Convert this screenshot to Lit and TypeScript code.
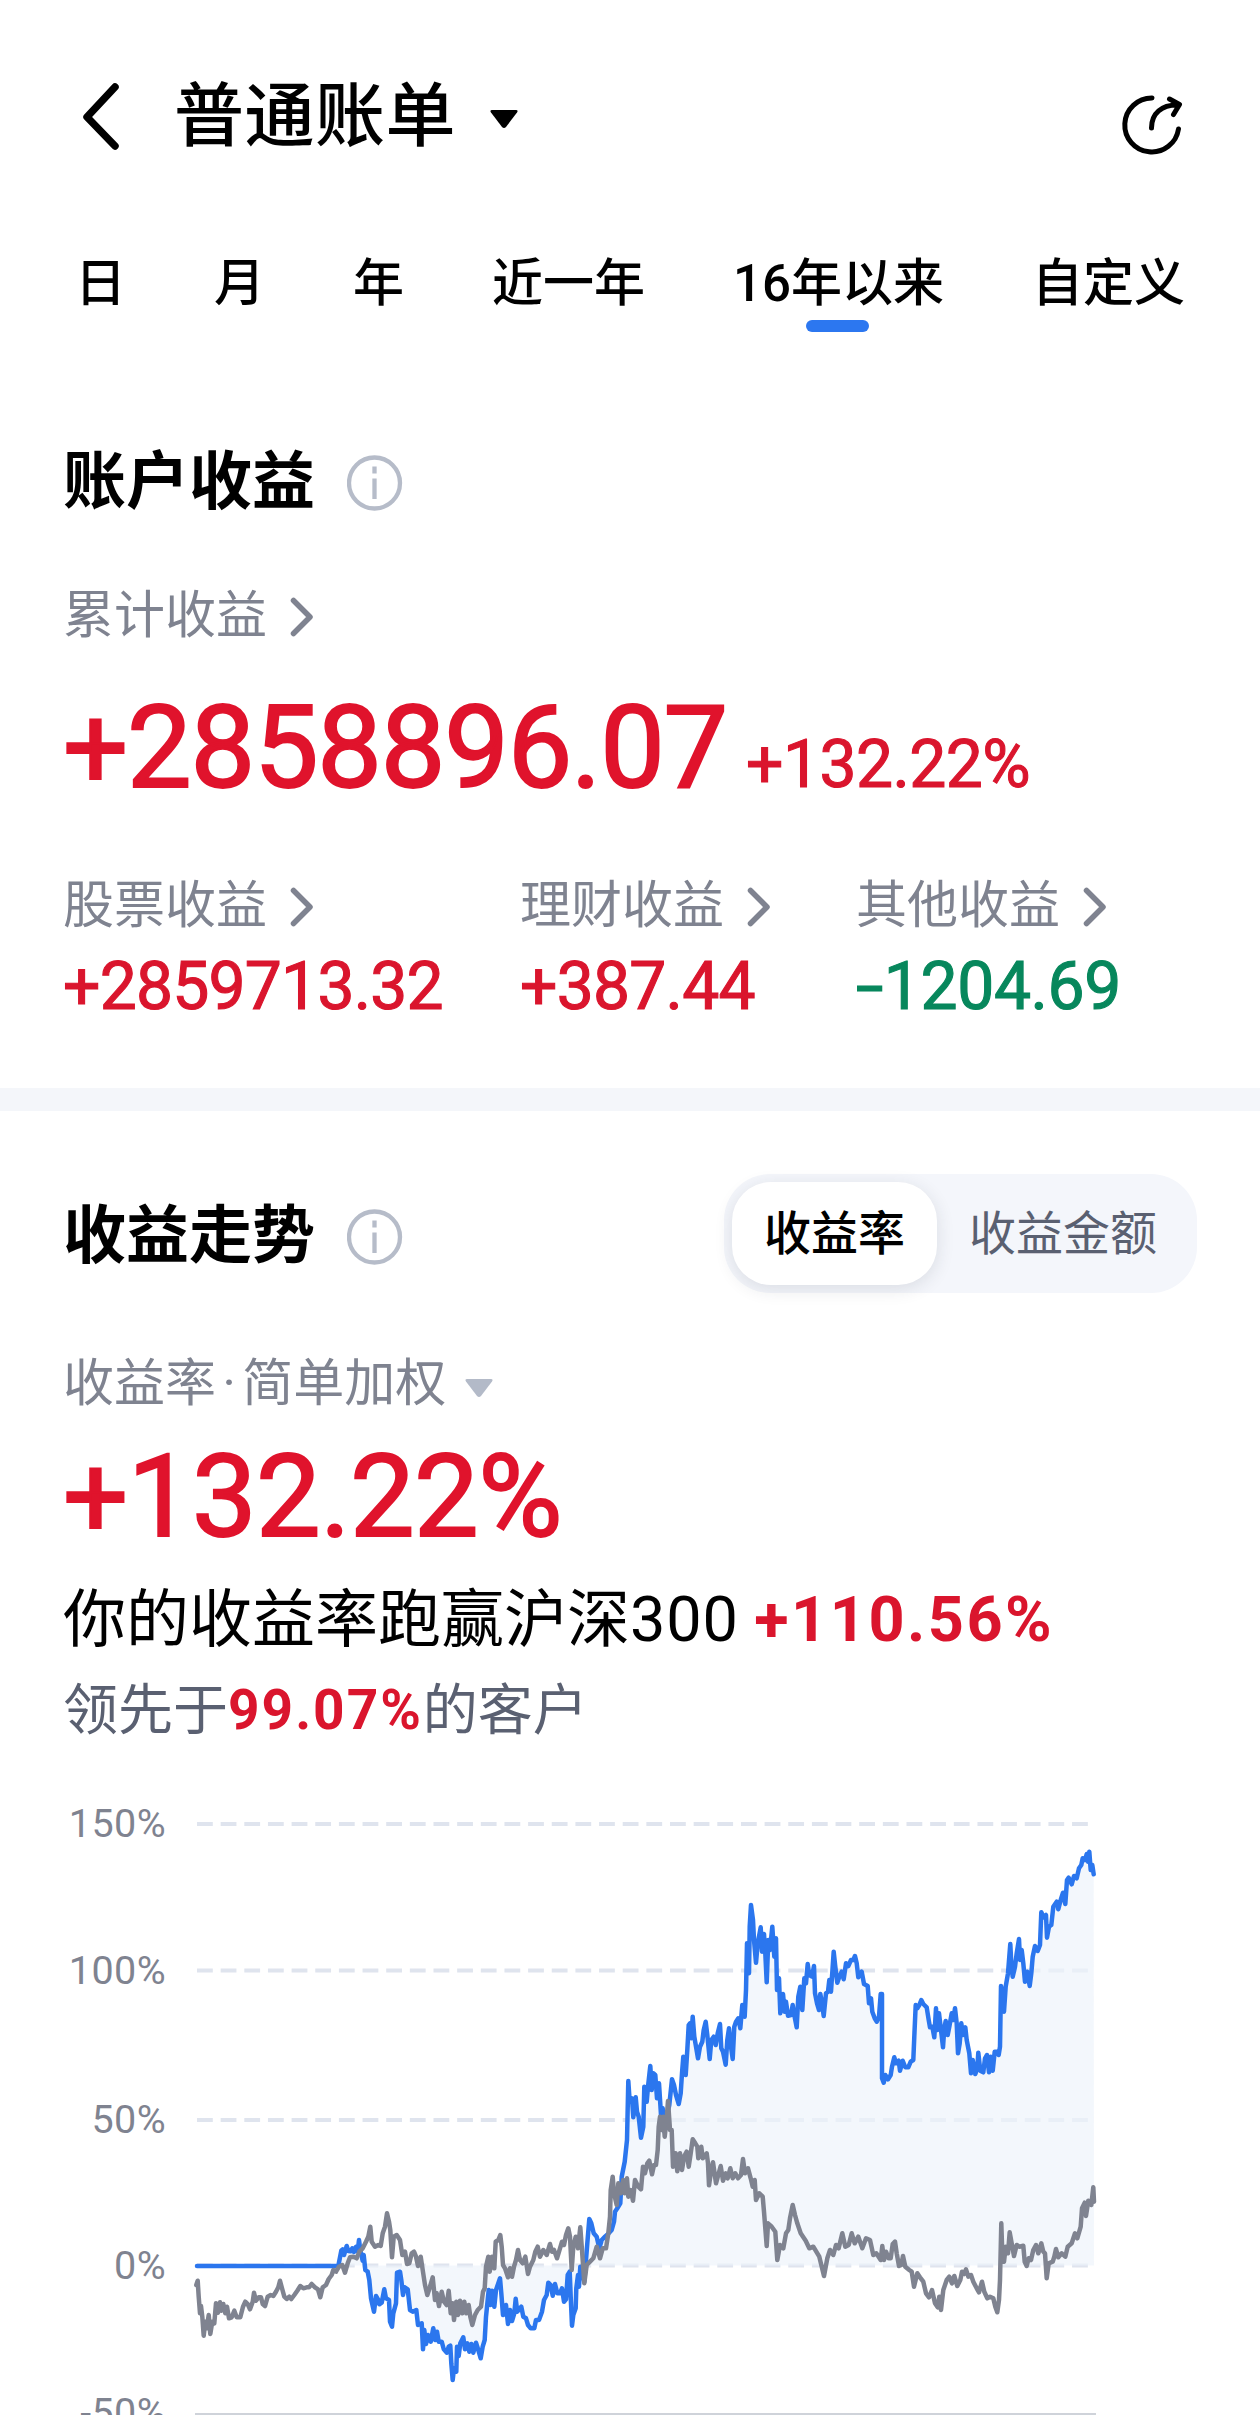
import { LitElement, html, svg, css } from "lit";
import { customElement, property } from "lit/decorators.js";

/* Chart coordinates are stored in thirds of a pixel. Every block is an origin
   followed by x,y pairs relative to it. */
type Block = { ox: number; oy: number; pts: string };

const BLUE: Block[] = [
  { ox: 540, oy: 6150, pts: "51,648 475,648 484,602 488,598 492,615 500,588 505,603 512,604 517,595 522,606 528,590 533,604 537,570 541,600 548,632 551,615 556,660 563,665 568,690 573,745 578,768 582,785 588,738 594,748 598,763 605,758 613,718 618,745 627,750 630,815 636,830 640,790 648,760 651,668 660,665 664,690 669,735 674,712 683,718 690,780 698,785 709,780 714,825 725,820 729,898 733,840 738,882 744,855 752,875 760,835 766,870 771,845 776,875 785,875 791,897 800,908 806,890 811,887 814,940 818,990 822,955 829,965 831,890 836,918 841,880 850,862 855,898 862,880 868,905 874,882 880,908 888,878 895,900 902,925 908,890 914,870 918,800 926,720 931,765 936,722 943,770 948,720" },
  { ox: 1440, oy: 6090, pts: "60,745 64,790 69,855 78,825 84,882 90,840 96,873 103,850 107,806 112,845 124,830 130,860 138,865 144,885 152,895 163,895 168,870 177,870 186,845 192,810 200,795 205,758 212,765 218,797 225,762 232,790 240,790 246,775 252,815 258,808 263,735 269,725 272,800 276,887 280,855 287,835 289,775 294,735 297,770 301,710 307,720 313,755 318,690 322,640 328,567 334,580 341,610 350,620 358,655 365,630 375,620 386,610 395,600 402,575 405,545 412,535 421,520 425,440 434,395 441,330 445,153 449,215 456,205 460,262 467,202 471,245 476,260 483,323 490,290 493,170 500,215 504,170 511,108 515,180 520,130 526,135 531,205 537,160 543,255 548,235 553,305 560,262 568,225 576,148 582,165 588,195 596,222 602,190 606,130 610,80 617,135 622,60" },
  { ox: 1920, oy: 5580, pts: "146,495 150,490 154,535 158,470 163,530 169,565 174,595 180,560 187,545 191,510 197,485 202,525 209,597 214,540 221,530 227,555 233,520 240,492 244,565 249,575 257,614 262,540 267,505 272,555 278,597 283,500 288,485 295,475 301,505 307,435 314,470 318,390 321,250 327,340 329,200 333,135 339,180 342,240 348,308 353,250 362,202 366,275 372,222 376,280 380,367 385,240 390,270 397,200 403,290 408,235 411,390 417,355 421,460 429,402 434,455 438,425 444,467 453,465 458,435 463,465 470,502 475,410 481,380 487,450 493,355 498,370 503,312 508,345 516,350 522,318 525,400 531,430 537,450 541,402 546,430 551,468 558,400 564,395 568,360 573,395 581,275 586,320 592,368 598,350 605,335 611,358 618,310 625,318 633,300 640,300 645,288 650,310 655,352 665,335 672,372 683,378 687,430 693,415 697,455 704,475" },
  { ox: 2580, oy: 5490, pts: "50,575 57,560 62,492 66,492 66,745 71,758 76,735 84,748 92,735 96,710 103,682 108,700 116,692 120,722 128,692 136,712 145,712 152,695 160,690 163,620 167,525 172,535 178,525 184,510 190,522 200,532 206,570 210,592 217,590 223,622 228,535 232,600 237,550 243,600 249,652 253,595 257,573 263,615 268,590 275,550 280,570 285,535 290,580 294,670 299,640 304,580 309,615 316,592 320,630 328,670 333,730 338,690 346,732 352,715 355,668 361,722 370,727 375,685 381,675 387,727 392,680 398,722 404,665 411,665 416,675 420,650 423,468 432,545 437,470 444,430 451,342 454,400 458,440 465,410 470,370 477,327 480,390 485,360 490,400 495,455 502,425 509,468 514,430 518,380 525,348 533,363 540,345 544,247 551,262 558,255 561,323 567,290 574,285 580,230 590,215 595,238 602,210 609,188 616,222 621,150 626,143 635,163 642,138 650,145 657,115 664,105 668,85 675,90 680,72 684,95 688,65 692,120 697,105 701,133" },
];

const GREY: Block[] = [
  { ox: 540, oy: 6150, pts: "49,705 53,692 56,740 60,790 63,768 67,800 71,857 76,815 80,835 86,795 91,852 97,815 103,820 108,760 114,788 120,757 124,782 130,762 136,790 141,770 147,805 155,802 163,782 170,802 181,802 189,770 196,755 203,762 210,778 218,755 222,728 228,752 236,742 243,742 248,762 255,768 263,740 272,735 280,738 288,725 295,712 300,692 306,715 313,740 320,747 328,740 334,747 343,735 352,722 361,708 370,715 380,712 387,712 395,702 405,712 414,718 421,742 428,712 438,705 446,687 455,675 460,660 468,665 477,650 487,645 495,668 503,640 510,622 520,620 530,625 538,605 548,595 558,575 565,560 571,530 575,575 585,590 595,585 602,588 608,550 615,530 621,490 627,515 631,540 636,622 641,560 650,555 660,570 667,615 675,605 681,642 688,640 695,610 702,605 708,620 714,648 722,620 728,660 735,705 742,735 750,710 758,682 765,750 770,730 777,768 785,725 792,755 800,765 806,722 812,790 818,760 822,810 829,755 834,795 840,752 847,790 853,755 859,790 866,765 871,800 877,825 885,795 893,780 903,770 909,725 914,715 918,650 925,620 929,665 936,620 943,655 947,575 955,570" },
  { ox: 1440, oy: 6090, pts: "61,615 65,650 69,705 75,715 84,742 90,715 96,740 102,710 108,690 114,660 120,690 128,700 136,680 144,732 150,710 160,690 166,665 173,650 180,680 190,660 200,675 210,642 216,665 222,660 231,685 240,655 246,635 252,645 258,615 265,595 270,620 275,720 280,650 287,620 294,655 301,592 306,660 313,760 320,705 330,695 340,685 350,650 360,685 368,655 378,655 385,610 390,560 392,480 398,440 402,490 410,525 415,460 422,490 430,450 434,490 441,445 445,500 452,480 459,512 465,450 475,470 483,478 489,410 495,430 502,400 508,392 516,433 522,405 528,405 533,360 536,290 540,260 545,300 550,260 554,320 560,265 564,213 570,300 575,300 579,410 587,370 592,424 600,370 606,420 613,378 620,365 626,410 632,370 638,328 646,340 652,350 655,385 664,350 668,385 680,370 684,400 687,466 693,425 699,397 708,460 716,430 722,408 729,452 737,430 743,445 751,415 758,445 766,430 774,445 783,435 789,387 795,430 804,415 812,445 818,470 824,450 828,510 838,490 848,500 852,545 860,648 864,580 875,590 886,605 892,690 900,645 910,655 918,610 925,600 930,565 938,525 945,555 952,580 962,610" },
  { ox: 0, oy: 0, pts: "2417,6722 2428,6745 2440,6740 2458,6770 2472,6828 2482,6775 2490,6750 2500,6765 2508,6735 2516,6745 2527,6700 2536,6740 2546,6735 2555,6700 2564,6730 2575,6710 2587,6745 2598,6715 2610,6720 2620,6765 2629,6760" },
  { ox: 2640, oy: 6240, pts: "2,540 7,498 12,540 18,515 26,535 32,535 38,492 45,485 50,520 57,558 64,555 69,528 76,560 88,570 95,575 102,620 112,580 120,592 130,605 138,640 147,652 156,630 165,670 173,682 178,650 183,690 190,630 200,600 208,590 216,610 223,588 232,618 241,600 246,575 253,582 258,568 265,590 273,585 280,605 290,625 297,637 306,605 313,635 322,655 330,650 340,655 346,680 352,697 357,660 360,600 364,430 367,520 372,545 377,500 384,520 389,457 395,490 402,528 410,495 418,500 430,497 434,545 440,558 446,535 453,540 460,510 468,495 475,520 484,490 490,515 495,520 500,595 506,550 518,545 523,530 528,507 535,532 545,520 556,530 563,500 575,490 585,460 592,475 602,440 606,385 614,368 618,408 625,362 634,375 640,322 642,365" },
];

const toPath = (blocks: Block[]) =>
  "M" +
  blocks
    .flatMap((b) =>
      b.pts.split(" ").map((p) => {
        const [x, y] = p.split(",").map(Number);
        return `${((b.ox + x) / 3).toFixed(1)} ${((b.oy + y) / 3).toFixed(1)}`;
      })
    )
    .join("L");

const ZERO_Y = 2265.5;
const GRID = [
  { y: 1824, label: "150%" },
  { y: 1970.5, label: "100%" },
  { y: 2120, label: "50%" },
  { y: ZERO_Y, label: "0%" },
];

@customElement("trend-chart")
export class TrendChart extends LitElement {
  static styles = css`
    :host { display: block; }
    .chart { display: block; width: 1260px; height: 635px; }
    .grid { stroke: #dfe4ee; stroke-width: 4; stroke-dasharray: 15.8 7.85; }
    .floor { stroke: #cfd3da; stroke-width: 2; }
    .axis { font: 400 39.5px Roboto, sans-serif; fill: #7f8390; text-anchor: end; letter-spacing: 0.4px; }
    .area { fill: rgba(237, 243, 251, 0.69); }
    .line { fill: none; stroke-linejoin: round; stroke-linecap: round; stroke-width: 4.5; }
    .blue { stroke: #2b76ee; }
    .grey { stroke: #7f8390; }
  `;

  render() {
    const blue = toPath(BLUE);
    return html`<svg class="chart" viewBox="0 1780 1260 635">
      ${GRID.map(
        (g) => svg`<line class="grid" x1="197" x2="1089" y1=${g.y} y2=${g.y}></line>
          <text class="axis" x="166" y=${g.y + 13}>${g.label}</text>`
      )}
      <line class="floor" x1="195" x2="1096" y1="2414" y2="2414"></line>
      <text class="axis" x="166" y="2426">-50%</text>
      <path class="area" d="${blue}L1094 ${ZERO_Y}L197 ${ZERO_Y}Z"></path>
      <path class="line blue" d=${blue}></path>
      <path class="line grey" d=${toPath(GREY)}></path>
    </svg>`;
  }
}

@customElement("info-icon")
export class InfoIcon extends LitElement {
  static styles = css`
    :host { display: block; width: 56px; height: 56px; }
    svg { display: block; }
  `;
  render() {
    return html`<svg width="56" height="56" viewBox="0 0 56 56" fill="none" stroke="#b6bcc9" stroke-width="4.3">
      <circle cx="27.5" cy="28" r="25.5"></circle>
      <path d="M27.500 11.5v7M27.500 23.5v20.5"></path>
    </svg>`;
  }
}

@customElement("entry-label")
export class EntryLabel extends LitElement {
  @property() text = "";
  static styles = css`
    :host { display: flex; align-items: center; height: 60px; color: #7f8390;
      font-size: 51px; line-height: 60px; }
    .text { white-space: nowrap; }
    .chevron { display: block; margin: 2px 0 0 19.5px; }
  `;
  render() {
    return html`<span class="text">${this.text}</span>
      <svg class="chevron" width="30" height="42" viewBox="0 0 30 42" fill="none" stroke="#7f8390"
        stroke-width="5.5" stroke-linecap="round" stroke-linejoin="round">
        <path d="M6.500 4.5L23 21L6.500 37.5"></path>
      </svg>`;
  }
}

const TABS = ["日", "月", "年", "近一年", "16年以来", "自定义"];

@customElement("app-root")
export class AppRoot extends LitElement {
  static styles = css`
    :host { display: block; width: 1260px; height: 2415px; overflow: hidden; background: #fff;
      font-family: Roboto, "Noto Sans CJK SC", sans-serif; color: #000; }
    svg { display: block; }
    .header { display: flex; align-items: center; height: 228px; padding: 0 76px 0 80px; box-sizing: border-box; }
    .back { margin-top: 4px; }
    .title { margin: 5px 0 0 52px; font-size: 70px; font-weight: 500; line-height: 84px; letter-spacing: 0.5px; }
    .caret { margin: 10px 0 0 33px; }
    .share { margin: 22px 0 0 auto; }
    .tabs { display: flex; justify-content: space-between; margin-top: 14px; padding: 0 75px 0 75px; height: 90px; }
    .tab { position: relative; font-size: 51px; font-weight: 500; line-height: 84px; }
    .tab.active::after { content: ""; position: absolute; left: 50%; top: 78px; width: 63px; height: 12px;
      margin-left: -32px; border-radius: 6px; background: #2c77f0; }
    .heading { display: flex; align-items: center; gap: 32px; height: 76px; }
    .heading h2 { margin: 0; font-size: 63px; line-height: 76px; font-weight: 700; }
    .heading info-icon { margin-top: 1px; }
    .account { padding: 112px 63px 0; height: 756px; box-sizing: border-box; }
    .total-label { margin-top: 66px; }
    .total { display: flex; align-items: baseline; height: 120px; margin-top: 42px; color: #e0132c; line-height: 120px; }
    .big { font-size: 115px; font-weight: 400; -webkit-text-stroke: 2px currentColor; }
    .total .big { letter-spacing: -1.2px; }
    .total .rate { margin-left: 19px; font-size: 66px; font-weight: 400; color: #da152d;
      letter-spacing: -0.6px; -webkit-text-stroke: 1.1px currentColor; }
    .parts { display: flex; margin-top: 68px; }
    .part { flex: none; width: 457px; }
    .part.second { width: 336px; }
    .part.third { width: auto; }
    .amount { margin-top: 13px; font-size: 66px; font-weight: 400; line-height: 76px; color: #da152d;
      letter-spacing: -0.8px; -webkit-text-stroke: 1.1px currentColor; }
    .amount.down { color: #07875c; letter-spacing: -0.4px; }
    .sign { display: inline-block; margin-right: 10px; transform: scaleX(1.5); transform-origin: left; }
    .divider { height: 23px; background: #f4f6fa; }
    .trend { padding: 63px 63px 0; height: 669px; box-sizing: border-box; }
    .trend-head { display: flex; justify-content: space-between; height: 119px; }
    .trend-head .heading { margin-top: 24px; }
    .segment { display: flex; width: 473px; padding: 8px; box-sizing: border-box; border-radius: 46px; background: #f4f6fb; }
    .option { font-size: 47px; line-height: 103px; color: #5a6071; text-align: center; }
    .option.on { width: 205px; border-radius: 39px; background: #fff; color: #000; font-weight: 500;
      box-shadow: 0 4px 18px rgba(30, 40, 60, 0.12); }
    .option.off { flex: 1; }
    .method { display: flex; align-items: center; height: 60px; margin-top: 61px; font-size: 51px;
      line-height: 60px; color: #7f8390; }
    .dot { margin: 0 6.5px; }
    .method svg { margin: 7px 0 0 18px; }
    .trend-rate { height: 120px; margin-top: 23px; line-height: 120px; color: #e0132c; letter-spacing: -0.5px; }
    .beat { margin-top: 25px; font-size: 63px; line-height: 76px; white-space: nowrap; }
    .lead { margin-top: 19px; font-size: 55px; line-height: 66px; color: #5a6071; white-space: nowrap; }
    b { color: #da152d; font-weight: 700; letter-spacing: 2px; }
    .beat b { letter-spacing: 2.5px; }
    .beat .index { letter-spacing: 0.8px; }
  `;

  render() {
    return html`
      <div class="header">
        <svg class="back" width="42" height="70" viewBox="0 0 42 70" fill="none" stroke="#000" stroke-width="7.5"
          stroke-linecap="round" stroke-linejoin="round"><path d="M35 6L7 36L35 65"></path></svg>
        <div class="title">普通账单</div>
        <svg class="caret" width="30" height="20" viewBox="0 0 30 20"><path d="M3 1H27Q29.500 1 28 3.500L17 18Q15 20 13 18L2 3.500Q.5 1 3 1Z"></path></svg>
        <svg class="share" width="64" height="64" viewBox="0 0 64 64" fill="none" stroke="#000" stroke-width="5"
          stroke-linecap="round" stroke-linejoin="round">
          <path d="M32 5A27 27 0 1 0 58.500 36"></path>
          <path d="M31.500 35C31.500 20 42 12 57 12M49.500 6L59.500 11.500L53.500 21.500"></path>
        </svg>
      </div>
      <div class="tabs">
        ${TABS.map((t, i) => html`<div class="tab ${i === 4 ? "active" : ""}">${t}</div>`)}
      </div>
      <div class="account">
        <div class="heading"><h2>账户收益</h2><info-icon></info-icon></div>
        <entry-label class="total-label" text="累计收益"></entry-label>
        <div class="total"><span class="big">+2858896.07</span><span class="rate">+132.22%</span></div>
        <div class="parts">
          <div class="part"><entry-label text="股票收益"></entry-label><div class="amount">+2859713.32</div></div>
          <div class="part second"><entry-label text="理财收益"></entry-label><div class="amount">+387.44</div></div>
          <div class="part third"><entry-label text="其他收益"></entry-label><div class="amount down"><span class="sign">-</span>1204.69</div></div>
        </div>
      </div>
      <div class="divider"></div>
      <div class="trend">
        <div class="trend-head">
          <div class="heading"><h2>收益走势</h2><info-icon></info-icon></div>
          <div class="segment"><div class="option on">收益率</div><div class="option off">收益金额</div></div>
        </div>
        <div class="method"><span>收益率<span class="dot">·</span>简单加权</span>
          <svg width="30" height="20" viewBox="0 0 30 20" fill="#b3bac8"><path d="M3 1H27Q29.500 1 28 3.500L17 18Q15 20 13 18L2 3.500Q.5 1 3 1Z"></path></svg>
        </div>
        <div class="big trend-rate">+132.22%</div>
        <div class="beat">你的收益率跑赢沪深<span class="index">300</span> <b>+110.56%</b></div>
        <div class="lead">领先于<b>99.07%</b>的客户</div>
      </div>
      <trend-chart></trend-chart>
    `;
  }
}
